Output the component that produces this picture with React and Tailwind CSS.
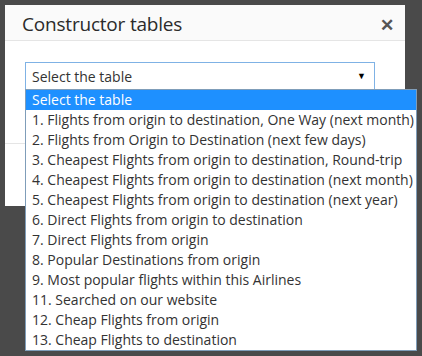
export default function App() {
  const items = [
    "1. Flights from origin to destination, One Way (next month)",
    "2. Flights from Origin to Destination (next few days)",
    "3. Cheapest Flights from origin to destination, Round-trip",
    "4. Cheapest Flights from origin to destination (next month)",
    "5. Cheapest Flights from origin to destination (next year)",
    "6. Direct Flights from origin to destination",
    "7. Direct Flights from origin",
    "8. Popular Destinations from origin",
    "9. Most popular flights within this Airlines",
    "11. Searched on our website",
    "12. Cheap Flights from origin",
    "13. Cheap Flights to destination",
  ];
  return (
    <div className="relative w-[422px] h-[356px] bg-[#4a4a4a] overflow-hidden" style={{ fontFamily: '"Open Sans", sans-serif' }}>
      <div className="absolute left-[5px] top-[5px] w-[400px] h-[201px] bg-white flex flex-col">
        <div className="h-[36px] bg-[#fafafa] border-b border-[#e5e5e5] flex items-center justify-between pl-[17px] pr-[11px] pt-[3px]">
          <span className="text-[19px] font-normal tracking-[-0.2px] text-[#2b2b2b]">Constructor tables</span>
          <span className="text-[#555] text-[17px] font-bold leading-none">✕</span>
        </div>
        <div className="h-[103px] border-b border-[#e5e5e5]"></div>
      </div>
      <div className="absolute left-[25px] top-[62px] w-[350px] h-[28px] bg-white border border-[#7fb2e5] flex items-center justify-between pl-[6px] pr-[8px]">
        <span className="text-[14px] text-[#333]">Select the table</span>
        <span className="text-[9px] text-black">▼</span>
      </div>
      <div className="absolute left-[25px] top-[89px] w-[392px] bg-white border border-[#7f9db9] flex flex-col">
        <div className="h-[20px] bg-[#1e90ff] text-white text-[14px] leading-[20px] pl-[6px]">Select the table</div>
        {items.map((t) => (
          <div key={t} className="h-[20px] text-[#333] text-[14px] leading-[20px] pl-[6px] whitespace-nowrap">{t}</div>
        ))}
      </div>
    </div>
  );
}
